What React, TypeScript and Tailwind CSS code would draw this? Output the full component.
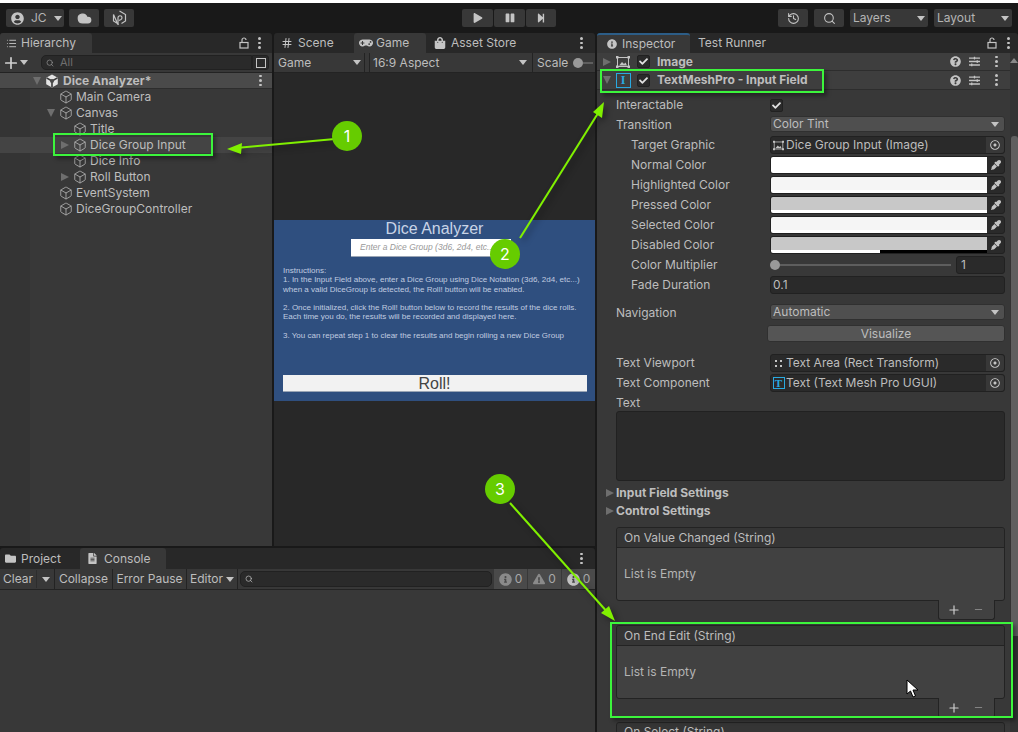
import { Box, Cloud, Hash, History, List, Plus, Minus, Search } from "lucide-react";
import { FaGamepad, FaFolder, FaInfoCircle, FaShoppingBag, FaQuestionCircle, FaEyeDropper, FaUserCircle, FaPlay, FaPause, FaStepForward, FaExclamationTriangle, FaCheck, FaSlidersH, FaRegDotCircle, FaFileAlt } from "react-icons/fa";

function Caret({ className = "" }: { className?: string }) {
  return <span className={`w-0 h-0 border-x-[4px] border-x-transparent border-t-[5px] border-t-[#c4c4c4] ${className}`} />;
}

function Fold({ open = false }: { open?: boolean }) {
  return open ? (
    <span className="w-0 h-0 border-x-[4.5px] border-x-transparent border-t-[8px] border-t-[#6e6e6e]" />
  ) : (
    <span className="w-0 h-0 border-y-[4.5px] border-y-transparent border-l-[8px] border-l-[#6e6e6e]" />
  );
}

function Kebab() {
  return (
    <span className="flex flex-col gap-[2px] w-[3px] items-center">
      <span className="size-[2.5px] rounded-full bg-[#c4c4c4]" />
      <span className="size-[2.5px] rounded-full bg-[#c4c4c4]" />
      <span className="size-[2.5px] rounded-full bg-[#c4c4c4]" />
    </span>
  );
}

function LockIcon() {
  return (
    <svg width="10" height="12" viewBox="0 0 10 12" fill="none" stroke="#c4c4c4" strokeWidth="1.2">
      <rect x="1" y="5.5" width="8" height="5.5" />
      <path d="M3 5.5V3a2 2 0 0 1 4 0" />
    </svg>
  );
}

function CollabIcon() {
  return (
    <svg width="15" height="16" viewBox="0 0 15 16" fill="none" stroke="#c4c4c4" strokeWidth="1.2">
      <path d="M7.5 1 L13.5 4.5 V11 L9.5 13.5 M5.5 13.5 L1.5 11 V4.5 Z" />
      <path d="M6 15 V7.5 A2 2 0 1 1 9 9.5 L7 10.5" />
    </svg>
  );
}

function UnityIcon() {
  return (
    <svg width="14" height="14" viewBox="0 0 14 14">
      <path d="M7 0.5 L12.8 3.7 V10.3 L7 13.5 L1.2 10.3 V3.7 Z" fill="#e4e4e4" />
      <path d="M7 7 V13 M7 7 L1.5 3.9 M7 7 L12.5 3.9" stroke="#3a3a3a" strokeWidth="1.6" />
      <circle cx="7" cy="7" r="2" fill="#4a4a4a" />
    </svg>
  );
}

function ImageIcon({ size = 14 }: { size?: number }) {
  return (
    <svg width={size} height={size} viewBox="0 0 14 14" fill="none" stroke="#c4c4c4" strokeWidth="1">
      <rect x="1.5" y="2.5" width="11" height="9" />
      <rect x="0" y="1" width="2.5" height="2.5" fill="#c4c4c4" stroke="none" />
      <rect x="11.5" y="1" width="2.5" height="2.5" fill="#c4c4c4" stroke="none" />
      <rect x="0" y="10.5" width="2.5" height="2.5" fill="#c4c4c4" stroke="none" />
      <rect x="11.5" y="10.5" width="2.5" height="2.5" fill="#c4c4c4" stroke="none" />
      <path d="M3 10.5 L6 7 L8 9 L9.5 7.5 L11 10.5 Z" fill="#c4c4c4" stroke="none" />
    </svg>
  );
}

function ToolButton({ children, className = "" }: { children: React.ReactNode; className?: string }) {
  return <div className={`h-[18px] bg-[#383838] rounded-[2px] flex items-center text-[#b4b4b4] ${className}`}>{children}</div>;
}

function Toolbar() {
  return (
    <div className="h-[30px] bg-[#191919] flex items-start pt-[6px] pl-[6px] pr-[6px]">
      <div className="flex gap-[5px]">
        <ToolButton className="w-[58px] gap-[7px] pl-[5px]">
          <FaUserCircle size={13} color="#c4c4c4" />
          <span className="text-[12px]">JC</span>
          <Caret />
        </ToolButton>
        <ToolButton className="w-[30px] justify-center"><Cloud size={15} fill="#c4c4c4" color="#c4c4c4" /></ToolButton>
        <ToolButton className="w-[30px] justify-center"><CollabIcon /></ToolButton>
      </div>
      <div className="flex gap-px ml-[328px] mr-auto">
        <ToolButton className="w-[31px] justify-center"><FaPlay size={10} color="#c4c4c4" /></ToolButton>
        <ToolButton className="w-[31px] justify-center"><FaPause size={10} color="#c4c4c4" /></ToolButton>
        <ToolButton className="w-[30px] justify-center"><FaStepForward size={10} color="#c4c4c4" /></ToolButton>
      </div>
      <div className="flex gap-[6px]">
        <ToolButton className="w-[30px] justify-center"><History size={13} color="#c4c4c4" /></ToolButton>
        <ToolButton className="w-[30px] justify-center"><Search size={13} color="#c4c4c4" /></ToolButton>
        <ToolButton className="w-[78px] justify-between px-[3px]"><span className="text-[12px]">Layers</span><Caret /></ToolButton>
        <ToolButton className="w-[78px] justify-between px-[3px]"><span className="text-[12px]">Layout</span><Caret /></ToolButton>
      </div>
    </div>
  );
}

function TreeRow({ label, depth, fold, selected = false }: { label: string; depth: number; fold?: boolean; selected?: boolean }) {
  return (
    <div className={`h-4 flex items-center ${selected ? "bg-[#444444]" : ""}`}>
      <div className={`flex items-center ${depth === 1 ? "pl-[61px]" : "pl-[47px]"}`}>
        <span className="w-[12px] flex">{fold === true && <Fold />}{fold === false && <Fold open />}</span>
        <Box size={14} strokeWidth={1.25} color="#c4c4c4" className="mr-[3px]" />
        <span>{label}</span>
      </div>
    </div>
  );
}

function Hierarchy() {
  return (
    <div className="w-[272px] flex flex-col">
      <div className="h-[20px] flex items-center bg-[#282828] justify-between pr-[11px] rounded-t-[3px]">
        <div className="w-[92px] h-full bg-[#383838] rounded-t-[3px] flex items-center gap-[4px] pl-[6px]">
          <List size={11} color="#c4c4c4" /><span>Hierarchy</span>
        </div>
        <div className="flex items-center gap-[9px]"><LockIcon /><Kebab /></div>
      </div>
      <div className="h-[20px] bg-[#383838] border-b border-[#232323] flex items-center pl-[2px] pr-[3px]">
        <Plus size={18} strokeWidth={2.25} color="#d0d0d0" />
        <Caret className="mr-[13px]" />
        <div className="flex-1 h-[15px] bg-[#2a2a2a] rounded-l-[5px] border border-[#212121] flex items-center pl-[4px] gap-[6px]">
          <Search size={8} color="#999999" /><span className="text-[#6f6f6f] text-[11px]">All</span>
        </div>
        <div className="w-[17px] h-[15px] bg-[#2a2a2a] border border-[#212121] rounded-r-[3px] flex items-center justify-center">
          <span className="size-[10px] border border-[#c4c4c4]" />
        </div>
      </div>
      <div className="flex-1 bg-[linear-gradient(to_right,#343434_30px,#383838_30px)] relative">
        <div className="h-[16px] bg-[#4a4a4a] border-b border-[#2d2d2d] flex items-center pl-[33px] pr-[10px] font-bold">
          <Fold open />
          <span className="ml-[4px] mr-[4px] flex"><UnityIcon /></span>
          <span className="flex-1">Dice Analyzer*</span>
          <Kebab />
        </div>
        <TreeRow label="Main Camera" depth={0} />
        <TreeRow label="Canvas" depth={0} fold={false} />
        <TreeRow label="Title" depth={1} />
        <TreeRow label="Dice Group Input" depth={1} fold selected />
        <TreeRow label="Dice Info" depth={1} />
        <TreeRow label="Roll Button" depth={1} fold />
        <TreeRow label="EventSystem" depth={0} />
        <TreeRow label="DiceGroupController" depth={0} />
      </div>
    </div>
  );
}

function GameView() {
  return (
    <div className="w-[321px] flex flex-col">
      <div className="h-[20px] flex bg-[#282828] items-center pr-[12px] rounded-t-[3px]">
        <div className="w-[80px] flex items-center gap-[5px] pl-[7px]"><Hash size={12} color="#c4c4c4" /><span>Scene</span></div>
        <div className="w-[72px] h-full bg-[#383838] rounded-t-[3px] flex items-center gap-[3px] pl-[5px]"><FaGamepad size={14} color="#c4c4c4" /><span>Game</span></div>
        <div className="flex items-center gap-[5px] pl-[8px] flex-1"><FaShoppingBag size={12} color="#c4c4c4" /><span>Asset Store</span></div>
        <Kebab />
      </div>
      <div className="h-[20px] bg-[#383838] border-b border-[#232323] flex items-center">
        <div className="w-[91px] h-full flex items-center justify-between pl-[4px] pr-[3px] border-r border-[#232323]"><span>Game</span><Caret /></div>
        <div className="w-[5px] h-full border-r border-[#232323]" />
        <div className="w-[163px] h-full flex items-center justify-between pl-[3px] pr-[5px] border-r border-[#232323]"><span>16:9 Aspect</span><Caret /></div>
        <div className="flex items-center pl-[4px] gap-[5px] overflow-hidden flex-1">
          <span>Scale</span>
          <span className="size-[10px] rounded-full bg-[#999999] shrink-0" />
          <span className="w-[10px] h-[2px] bg-[#5e5e5e] -ml-[5px] shrink-0" />
        </div>
      </div>
      <div className="flex-1 bg-[#282828] flex flex-col pt-[147px]">
        <div className="h-[181px] bg-[#2f4f7f] flex flex-col items-center font-['Liberation_Sans',sans-serif]">
          <div className="text-[16px] leading-[17px] text-[#c8d4e6]">Dice Analyzer</div>
          <div className="self-start ml-[77px] w-[160px] h-[18px] mt-[2px] bg-white border-b border-[#9aa5b5] text-[8.5px] italic text-[#999999] pl-[9px] leading-[17px]">Enter a Dice Group (3d6, 2d4, etc...)</div>
          <div className="self-start pl-[9px] text-[8px] leading-[9.25px] text-[#c0cce0] mt-[9px] whitespace-pre">
            {"Instructions:\n1. In the Input Field above, enter a Dice Group using Dice Notation (3d6, 2d4, etc...)\nwhen a valid DiceGroup is detected, the Roll! button will be enabled.\n\n2. Once initialized, click the Roll! button below to record the results of the dice rolls.\nEach time you do, the results will be recorded and displayed here.\n\n3. You can repeat step 1 to clear the results and begin rolling a new Dice Group"}
          </div>
          <div className="mt-auto mb-[9px] w-[304px] h-[17px] bg-[#f2f2f2] border-b border-[#9aa5b5] text-[16px] leading-[18px] text-[#444444] text-center">Roll!</div>
        </div>
      </div>
    </div>
  );
}

function CountBadge({ children }: { children: React.ReactNode }) {
  return <div className="w-[33px] h-[20px] bg-[#4a4a4a] flex items-center justify-center gap-[3px] text-[#a8a8a8]">{children}</div>;
}

function ConsoleBar() {
  const cell = "h-full flex items-center border-r border-[#232323]";
  return (
    <div className="h-[184px] flex flex-col">
      <div className="h-[21px] flex bg-[#282828] items-center pr-[12px] rounded-t-[3px]">
        <div className="w-[80px] flex items-center gap-[5px] pl-[5px]"><FaFolder size={11} color="#c4c4c4" /><span>Project</span></div>
        <div className="w-[86px] h-full bg-[#383838] rounded-t-[3px] flex items-center gap-[6px] pl-[7px]"><FaFileAlt size={11} color="#c4c4c4" /><span>Console</span></div>
        <div className="flex-1" />
        <Kebab />
      </div>
      <div className="h-[21px] bg-[#383838] border-b border-[#232323] flex items-center">
        <div className={`${cell} w-[55px] pl-[3px] pr-[4px]`}><span className="flex-1 border-r border-[#2d2d2d] mr-[5px]">Clear</span><Caret /></div>
        <div className={`${cell} w-[58px] justify-center`}>Collapse</div>
        <div className={`${cell} w-[74px] justify-center`}>Error Pause</div>
        <div className={`${cell} w-[51px] justify-center gap-[3px]`}><span>Editor</span><Caret /></div>
        <div className="flex-1 h-[16px] mx-[2px] bg-[#2a2a2a] border border-[#212121] rounded-[5px] flex items-center pl-[4px]"><Search size={8} color="#c4c4c4" /></div>
        <CountBadge><FaInfoCircle size={13} color="#8a8a8a" /><span>0</span></CountBadge>
        <span className="w-px" />
        <CountBadge><FaExclamationTriangle size={12} color="#8a8a8a" /><span>0</span></CountBadge>
        <span className="w-px" />
        <CountBadge><FaInfoCircle size={13} color="#c4c4c4" /><span>0</span></CountBadge>
      </div>
      <div className="flex-1 bg-[#383838]" />
    </div>
  );
}

function Check({ size = 9 }: { size?: number }) {
  return (
    <span className="size-[13px] bg-[#2a2a2a] rounded-[2px] border border-[#212121] flex items-center justify-center">
      <FaCheck size={size} color="#e0e0e0" />
    </span>
  );
}

function ComponentHeader({ title, open, icon, h }: { title: string; open?: boolean; icon: React.ReactNode; h: string }) {
  return (
    <div className={`${h} bg-[#3e3e3e] border-b border-[#2d2d2d] flex items-center pl-[6px] pr-[12px] font-bold`}>
      <span className="w-[12px] flex"><Fold open={open} /></span>
      <span className="w-[16px] flex justify-center mr-[6px]">{icon}</span>
      <Check />
      <span className="ml-[7px] flex-1">{title}</span>
      <div className="flex items-center">
        <FaQuestionCircle size={11} color="#c4c4c4" />
        <FaSlidersH size={11} color="#c4c4c4" className="ml-[8px] mr-[15px]" />
        <Kebab />
      </div>
    </div>
  );
}

function Row({ label, indent = false, h = "h-[20px]", children }: { label: string; indent?: boolean; h?: string; children?: React.ReactNode }) {
  return (
    <div className={`${h} flex items-center`}>
      <span className={`w-[154px] ${indent ? "pl-[15px]" : ""}`}>{label}</span>
      <div className="flex-1 flex items-center">{children}</div>
    </div>
  );
}

function Dropdown({ value }: { value: string }) {
  return (
    <div className="w-full h-[16px] -mt-[2px] bg-[#4f4f4f] rounded-[3px] border border-[#303030] flex items-center justify-between pl-[2px] pr-[5px]">
      <span>{value}</span><Caret />
    </div>
  );
}

function ObjectField({ icon, value }: { icon: React.ReactNode; value: string }) {
  return (
    <div className="w-full h-[18px] bg-[#2a2a2a] border border-[#212121] rounded-[3px] flex items-center pl-[1px]">
      <span className="w-[13px] flex justify-center">{icon}</span>
      <span className="flex-1 pl-px">{value}</span>
      <span className="w-[18px] h-full bg-[#383838] rounded-r-[3px] flex items-center justify-center"><FaRegDotCircle size={10} color="#c4c4c4" /></span>
    </div>
  );
}

function ColorField({ main, strip }: { main: string; strip: React.ReactNode }) {
  return (
    <div className="w-full h-[18px] bg-[#2a2a2a] border border-[#212121] rounded-[3px] flex items-center overflow-hidden">
      <div className="w-[216px] h-full flex flex-col">
        <div className={`flex-1 ${main}`} />
        {strip}
      </div>
      <span className="flex-1 flex items-center justify-center"><FaEyeDropper size={10} color="#c4c4c4" /></span>
    </div>
  );
}

function EventBox({ title }: { title: string }) {
  return (
    <div className="flex flex-col">
      <div className="border border-[#232323] rounded-[3px] h-[74px] flex flex-col">
        <div className="h-[20px] bg-[#353535] border-b border-[#232323] flex items-center pl-[7px] rounded-t-[3px]">{title}</div>
        <div className="flex-1 bg-[#414141] flex items-center pl-[7px] rounded-b-[3px] text-[#b4b4b4]">List is Empty</div>
      </div>
      <div className="h-[19px] flex justify-end pr-[10px]">
        <div className="w-[57px] h-[20px] bg-[#414141] border-x border-b border-[#232323] rounded-b-[3px] flex items-center justify-between pl-[8px] pr-[10px] -mt-px">
          <Plus size={14} strokeWidth={2} color="#d0d0d0" />
          <Minus size={11} strokeWidth={2} color="#8a8a8a" />
        </div>
      </div>
    </div>
  );
}

function Inspector() {
  return (
    <div className="flex-1 flex flex-col overflow-hidden">
      <div className="h-[20px] flex items-center bg-[#282828] pr-[8px] rounded-t-[3px]">
        <div className="w-[93px] h-full bg-[#383838] border-t-2 border-[#2c5d87] rounded-t-[3px] flex items-center gap-[5px] pl-[10px]"><FaInfoCircle size={10} color="#c4c4c4" /><span>Inspector</span></div>
        <span className="ml-[8px] flex-1">Test Runner</span>
        <div className="flex items-center gap-[10px]"><LockIcon /><Kebab /></div>
      </div>
      <div className="flex-1 flex bg-[#383838]">
        <div className="w-[413px] flex flex-col">
          <ComponentHeader h="h-[18px]" title="Image" icon={<ImageIcon />} />
          <ComponentHeader h="h-[19px]" title="TextMeshPro - Input Field" open icon={<span className="size-[15px] border border-[#29a9e0] text-[#29a9e0] text-[12px] leading-[13px] text-center font-['Liberation_Serif',serif]">I</span>} />
          <div className="flex flex-col pl-[19px] pr-[5px] pt-[5px]">
            <Row label="Interactable"><Check /></Row>
            <Row label="Transition"><Dropdown value="Color Tint" /></Row>
            <Row label="Target Graphic" indent><ObjectField icon={<ImageIcon size={11} />} value="Dice Group Input (Image)" /></Row>
            <Row label="Normal Color" indent><ColorField main="bg-white" strip={<div className="h-[1px] bg-white" />} /></Row>
            <Row label="Highlighted Color" indent><ColorField main="bg-[#f5f5f5]" strip={<div className="h-[3px] bg-white" />} /></Row>
            <Row label="Pressed Color" indent><ColorField main="bg-[#c8c8c8]" strip={<div className="h-[3px] bg-white" />} /></Row>
            <Row label="Selected Color" indent><ColorField main="bg-[#f5f5f5]" strip={<div className="h-[3px] bg-white" />} /></Row>
            <Row label="Disabled Color" indent><ColorField main="bg-[#c8c8c8]" strip={<div className="h-[3px] flex"><span className="w-[109px] bg-white" /><span className="flex-1 bg-black" /></div>} /></Row>
            <Row label="Color Multiplier" indent>
              <span className="size-[10px] rounded-full bg-[#999999]" />
              <span className="w-[171px] h-[2px] bg-[#5e5e5e] mr-[5px]" />
              <div className="flex-1 h-[18px] bg-[#2a2a2a] border border-[#212121] rounded-[3px] pl-[4px] leading-[16px]">1</div>
            </Row>
            <Row label="Fade Duration" indent>
              <div className="flex-1 h-[18px] bg-[#2a2a2a] border border-[#212121] rounded-[3px] pl-[2px] leading-[16px]">0.1</div>
            </Row>
            <div className="h-[8px]" />
            <Row label="Navigation"><Dropdown value="Automatic" /></Row>
            <div className="h-[21px] flex items-center justify-end">
              <div className="w-[238px] h-[17px] bg-[#555555] border border-[#303030] rounded-[3px] text-center leading-[15px]">Visualize</div>
            </div>
            <div className="h-[9px]" />
            <Row label="Text Viewport"><ObjectField icon={<span className="grid grid-cols-2 gap-[3px]"><span className="size-[2px] bg-[#c4c4c4]" /><span className="size-[2px] bg-[#c4c4c4]" /><span className="size-[2px] bg-[#c4c4c4]" /><span className="size-[2px] bg-[#c4c4c4]" /></span>} value="Text Area (Rect Transform)" /></Row>
            <Row label="Text Component"><ObjectField icon={<span className="size-[12px] border border-[#29a9e0] text-[#29a9e0] text-[11px] leading-[10px] font-bold text-center font-['Liberation_Serif',serif]">T</span>} value="Text (Text Mesh Pro UGUI)" /></Row>
            <div className="h-[18px] flex items-center pt-[2px]">Text</div>
            <div className="h-[70px] bg-[#2a2a2a] border border-[#212121] rounded-[3px] shrink-0" />
            <div className="h-[3px]" />
            <div className="h-[18px] flex items-center font-bold -ml-[10px] gap-[2px]"><Fold /><span>Input Field Settings</span></div>
            <div className="h-[18px] flex items-center font-bold -ml-[10px] gap-[2px]"><Fold /><span>Control Settings</span></div>
            <div className="h-[7px]" />
            <EventBox title="On Value Changed (String)" />
            <div className="h-[5px]" />
            <EventBox title="On End Edit (String)" />
            <div className="h-[4px]" />
            <div className="h-[20px] border border-[#232323] rounded-t-[3px] bg-[#353535] pl-[7px] leading-[18px] shrink-0">On Select (String)</div>
          </div>
        </div>
        <div className="flex-1 bg-[#333333] flex flex-col items-center pt-[5px]">
          <span className="w-0 h-0 border-x-[4px] border-x-transparent border-b-[5px] border-b-[#888888]" />
          <div className="mt-[73px] w-[7px] h-[500px] bg-[#5f5f5f] rounded-t-[3px] ml-[1px]" />
        </div>
      </div>
    </div>
  );
}

function Annotations() {
  return (
    <div className="absolute inset-0 pointer-events-none">
      <svg width="1018" height="732" className="absolute inset-0 drop-shadow-[3px_3px_3px_rgba(0,0,0,0.4)]">
        <g stroke="#80f000" strokeWidth="2" fill="#80f000">
          <line x1="335" y1="139" x2="236" y2="148" />
          <path d="M227 149 L242 143 L241 154 Z" stroke="none" />
          <line x1="520" y1="238" x2="600" y2="110" />
          <path d="M604 102 L602 118 L593 112 Z" stroke="none" />
          <line x1="510" y1="503" x2="609" y2="614" />
          <path d="M615 621 L601 613 L609 606 Z" stroke="none" />
        </g>
      </svg>
      <div className="absolute left-[53px] top-[133px] w-[160px] h-[23px] border-2 border-[#3cf53c] shadow-[3px_3px_4px_rgba(0,0,0,0.35)]" />
      <div className="absolute left-[600px] top-[69px] w-[224px] h-[24px] border-2 border-[#3cf53c] shadow-[3px_3px_4px_rgba(0,0,0,0.35)]" />
      <div className="absolute left-[610px] top-[622px] w-[403px] h-[96px] border-2 border-[#3cf53c] shadow-[3px_3px_4px_rgba(0,0,0,0.35)]" />
      <div className="absolute left-[332px] top-[121px] size-[30px] rounded-full bg-[#66cc00] text-white text-[16px] leading-[30px] text-center">1</div>
      <div className="absolute left-[490px] top-[239px] size-[30px] rounded-full bg-[#66cc00] text-white text-[16px] leading-[30px] text-center">2</div>
      <div className="absolute left-[485px] top-[474px] size-[30px] rounded-full bg-[#66cc00] text-white text-[16px] leading-[30px] text-center">3</div>
      <svg width="14" height="20" viewBox="0 0 14 20" className="absolute left-[906px] top-[679px]">
        <path d="M1 1 L1 15 L4.5 12 L7 18 L9.5 17 L7 11 L12 11 Z" fill="white" stroke="black" strokeWidth="1" />
      </svg>
    </div>
  );
}

export default function App() {
  return (
    <div className="relative w-[1018px] h-[732px] overflow-hidden bg-[#191919] text-[#bdbdbd] text-[12px] font-['Inter',sans-serif] flex flex-col">
      <div className="h-[3px] bg-white" />
      <Toolbar />
      <div className="flex-1 flex min-h-0">
        <div className="w-[595px] flex flex-col">
          <div className="flex-1 flex gap-[2px] mb-[2px] min-h-0">
            <Hierarchy />
            <GameView />
          </div>
          <ConsoleBar />
        </div>
        <div className="w-[2px]" />
        <Inspector />
      </div>
      <Annotations />
    </div>
  );
}
